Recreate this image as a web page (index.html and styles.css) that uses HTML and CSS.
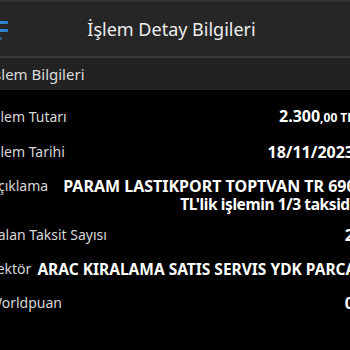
FILE: index.html
```html
<!doctype html>
<html lang="tr">
  <head>
    <meta charset="UTF-8" />
    <meta name="viewport" content="width=device-width, initial-scale=1.0" />
    <title>İşlem Detay Bilgileri</title>
    <link rel="stylesheet" href="styles.css">
  </head>
  <body>
    <div class="screen">
      <header class="topbar">
        <div class="menu-icon">
          <span class="bar"></span>
          <span class="bar"></span>
          <span class="bar short"></span>
        </div>
        <h1 class="title">İşlem Detay Bilgileri</h1>
        <div class="menu-spacer"></div>
      </header>

      <div class="section-head">İşlem Bilgileri</div>

      <div class="detail-list">
        <div class="detail-row">
          <span class="label">İşlem Tutarı</span>
          <span class="value">2.300<small>,00 TL</small></span>
        </div>
        <div class="detail-row">
          <span class="label">İşlem Tarihi</span>
          <span class="value">18/11/2023</span>
        </div>
        <div class="detail-row top">
          <span class="label">Açıklama</span>
          <span class="value wrap">
            <span class="line">PARAM LASTIKPORT TOPTVAN TR 6900,00</span>
            <span class="line tight">TL'lik işlemin 1/3 taksidi</span>
          </span>
        </div>
        <div class="detail-row">
          <span class="label">Kalan Taksit Sayısı</span>
          <span class="value">2</span>
        </div>
        <div class="detail-row">
          <span class="label">Sektör</span>
          <span class="value nowrap">ARAC KIRALAMA SATIS SERVIS YDK PARCA</span>
        </div>
        <div class="detail-row">
          <span class="label">Worldpuan</span>
          <span class="value">0</span>
        </div>
      </div>
    </div>
  </body>
</html>
```

FILE: styles.css
```css
body {
  margin: 0;
  padding: 0;
  background: #000;
  overflow: hidden;
  font-family: 'Noto Sans', 'Open Sans', sans-serif;
  color: #fff;
}

.screen {
  width: 397px;
  margin-left: -27px;
  height: 350px;
}

.topbar {
  display: flex;
  align-items: center;
  height: 54px;
  padding: 0 15px;
  background: #262626;
  border-top: 2px solid #333;
  border-bottom: 2px solid #3a3a3a;
}

.menu-icon {
  display: flex;
  flex-direction: column;
  gap: 5px;
  width: 20px;
  margin-top: 2px;
}

.menu-icon .bar {
  display: block;
  height: 3px;
  background: #2f86d0;
  border-radius: 1px;
}

.menu-icon .bar.short {
  width: 14px;
  background: #3a5f80;
}

.menu-spacer {
  width: 20px;
}

.title {
  flex: 1;
  margin: 0;
  text-align: center;
  font-size: 18px;
  font-weight: normal;
  color: #eee;
}

.section-head {
  height: 32px;
  line-height: 32px;
  padding: 0 16px;
  background: #222;
  color: #ddd;
  font-size: 15px;
}

.detail-list {
  padding: 9px 16px 0;
}

.detail-row {
  display: flex;
  align-items: center;
  justify-content: space-between;
  gap: 6px;
  padding: 8px 0;
  line-height: 18px;
}

.detail-row.top {
  align-items: flex-start;
  padding-bottom: 5px;
}

.label {
  flex-shrink: 0;
  font-size: 14px;
  color: #d8d8d8;
}

.value {
  font-size: 16px;
  font-weight: bold;
  text-align: right;
  color: #fff;
}

.value small {
  font-size: 12px;
}

.value.wrap {
  flex: 1;
  min-width: 0;
  margin-left: 9px;
  white-space: nowrap;
}

.value .line {
  display: block;
}

.value .line.tight {
  font-size: 15.5px;
  letter-spacing: -0.4px;
}

.value.nowrap {
  white-space: nowrap;
  font-size: 15.5px;
}
```
